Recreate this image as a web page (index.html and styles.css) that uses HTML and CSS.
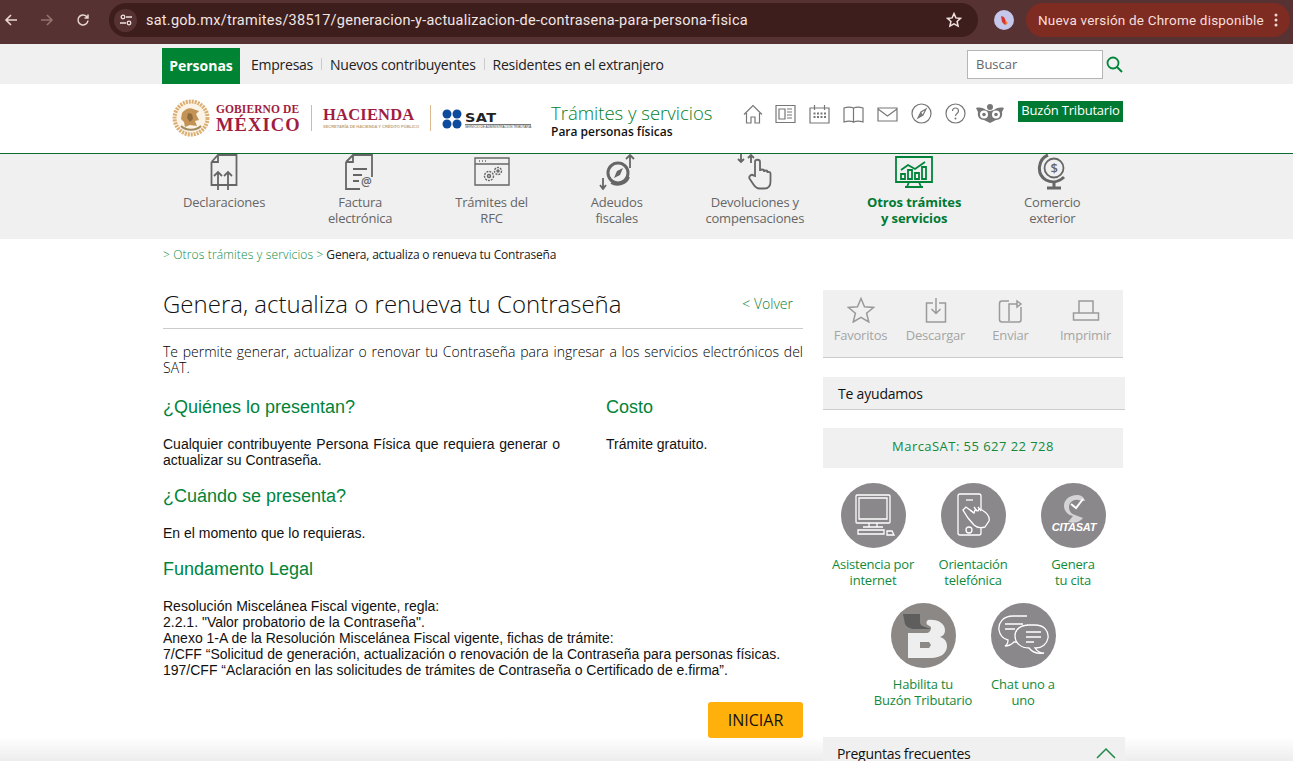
FILE: index.html
```html
<!DOCTYPE html>
<html lang="es">
<head>
<meta charset="utf-8">
<title>Genera, actualiza o renueva tu Contraseña</title>
<link rel="stylesheet" href="styles.css">
</head>
<body>
<div class="chrome">
  <svg class="cbtn" width="14" height="14" viewBox="0 0 14 14"><path d="M13 7H2M7 2 2 7l5 5" fill="none" stroke="#e9d6d4" stroke-width="1.6"/></svg>
  <svg class="cbtn dim" width="14" height="14" viewBox="0 0 14 14"><path d="M1 7h11M7 2l5 5-5 5" fill="none" stroke="#94736f" stroke-width="1.6"/></svg>
  <svg class="cbtn" width="14" height="14" viewBox="0 0 14 14"><path d="M12 7.5A5 5 0 1 1 10.5 3.4L12 5M12 1.5V5H8.5" fill="none" stroke="#e9d6d4" stroke-width="1.5"/></svg>
  <div class="omni">
    <span class="tune"><svg width="14" height="12" viewBox="0 0 14 12"><g fill="none" stroke="#f0e2e0" stroke-width="1.3"><circle cx="4" cy="3" r="1.8"/><path d="M7 3h6M1 9h6"/><circle cx="10" cy="9" r="1.8"/></g></svg></span>
    <span class="url">sat.gob.mx/tramites/38517/generacion-y-actualizacion-de-contrasena-para-persona-fisica</span>
    <svg class="ostar" width="16" height="16" viewBox="0 0 16 16"><path d="m8 1.6 1.9 4.3 4.6.5-3.4 3.1 1 4.6L8 11.8l-4.1 2.3 1-4.6L1.500 6.400l4.600-.5z" fill="none" stroke="#f0e2e0" stroke-width="1.5"/></svg>
  </div>
  <span class="avatar"><svg width="20" height="20" viewBox="0 0 20 20"><circle cx="10" cy="10" r="10" fill="#c5c8ea"/><path d="M7 6l3 1 3 6-2 2-3-3z" fill="#d8342b"/><path d="M11 10l3 3-2 2z" fill="#f08a3a"/></svg></span>
  <div class="update"><span>Nueva versión de Chrome disponible</span><svg width="4" height="14" viewBox="0 0 4 14"><g fill="#f0d8d4"><circle cx="2" cy="2" r="1.500"/><circle cx="2" cy="7" r="1.500"/><circle cx="2" cy="12" r="1.500"/></g></svg></div>
</div>

<div class="topbar">
  <div class="wrap topbar-in">
    <a class="tab">Personas</a>
    <a class="toplink">Empresas</a><i class="sep"></i>
    <a class="toplink">Nuevos contribuyentes</a><i class="sep"></i>
    <a class="toplink">Residentes en el extranjero</a>
    <div class="search">
      <div class="search-box">Buscar</div>
      <svg width="17" height="17" viewBox="0 0 17 17"><circle cx="7" cy="7" r="5.500" fill="none" stroke="#00843a" stroke-width="1.800"/><path d="m11 11 5 5" stroke="#00843a" stroke-width="2"/></svg>
    </div>
  </div>
</div>

<header class="head">
  <div class="wrap head-in">
    <div class="logos">
      <svg class="emblem" width="38" height="38" viewBox="0 0 38 38"><circle cx="19" cy="19" r="16.500" fill="#fbf3e6" stroke="#dcae72" stroke-width="4" stroke-dasharray="2 1"/><path d="M10 14c3-4 8-6 11-4l6 2-3 3 3 6-4 1 2 5-7-1-5 2-1-5-3-3z" fill="#c39356"/><path d="M16 14l4 1 1 5-3 3-3-4z" fill="#8e6a3c"/><path d="M9 27c5 5 15 5 20 0" fill="none" stroke="#a38a5e" stroke-width="2"/></svg>
      <div class="gob"><span class="gob1">GOBIERNO DE</span><span class="gob2">MÉXICO</span></div>
      <i class="lsep"></i>
      <div class="hac"><span class="hac1">HACIENDA</span><span class="hac2">SECRETARÍA DE HACIENDA Y CRÉDITO PÚBLICO</span></div>
      <i class="lsep sat-sep"></i>
      <svg class="satdots" width="20" height="20" viewBox="0 0 20 20"><g fill="#0f4b9c"><ellipse cx="5" cy="5" rx="4.500" ry="4.500"/><ellipse cx="15" cy="5" rx="4.500" ry="4.500"/><ellipse cx="5" cy="15" rx="4.500" ry="4.500"/><ellipse cx="15" cy="15" rx="4.500" ry="4.500"/></g></svg>
      <div class="sat"><span class="sat1">SAT</span><span class="sat2">SERVICIO DE ADMINISTRACIÓN TRIBUTARIA</span></div>
    </div>
    <div class="ts"><div class="ts1">Trámites y servicios</div><div class="ts2">Para personas físicas</div></div>
    <div class="hicons">
      <svg class="h-home" width="20" height="20" viewBox="0 0 20 20"><path d="M1 10.500 10 1.500l9 9M3.500 9v10h4.500v-6h4v6h4.500V9" class="ln"/></svg>
      <svg width="21" height="20" viewBox="0 0 21 20"><path d="M1 1.500h19v17H1zM4 5h6v10H4zM12 5h5M12 8h5M12 11h5M12 14h5" class="ln"/></svg>
      <svg width="21" height="20" viewBox="0 0 21 20"><path d="M1 4h19v15H1zM5.500 1v5M15.500 1v5" class="ln"/><g fill="#777"><rect x="4.500" y="8.500" width="2" height="2"/><rect x="8" y="8.500" width="2" height="2"/><rect x="11.500" y="8.500" width="2" height="2"/><rect x="15" y="8.500" width="2" height="2"/><rect x="4.500" y="12" width="2" height="2"/><rect x="8" y="12" width="2" height="2"/><rect x="11.500" y="12" width="2" height="2"/><rect x="15" y="12" width="2" height="2"/></g></svg>
      <svg width="21" height="20" viewBox="0 0 21 20"><path d="M1 4c3-1 7-1 9.500 0v14C8 17 4 17 1 18zM20 4c-3-1-7-1-9.500 0v14c2.500-1 6.500-1 9.500 0z" class="ln"/></svg>
      <svg width="21" height="20" viewBox="0 0 21 20"><path d="M1 4h19v13H1zM1 5l9.500 7L20 5" class="ln"/></svg>
      <svg width="21" height="21" viewBox="0 0 21 21"><circle cx="10.500" cy="10.500" r="9.500" class="ln"/><path d="m15 6-3 6-5 3 3-6z" class="ln"/><path d="m7 15 5-3-2-3z" fill="#777"/></svg>
      <svg width="21" height="21" viewBox="0 0 21 21"><circle cx="10.500" cy="10.500" r="9.500" class="ln"/><path d="M7.500 8c0-4 6-4 6 0 0 2.500-3 2.500-3 5" class="ln"/><circle cx="10.500" cy="15.500" r="1" fill="#777"/></svg>
      <svg class="h-owl" width="28" height="20" viewBox="0 0 28 20"><path d="M0 4c4-1 8 0 10 2l4 1 4-1c2-2 6-3 10-2l-2 4c1 5-2 8-6 8l-6 3-6-3c-4 0-7-3-6-8z" fill="#777"/><circle cx="14" cy="3" r="3" fill="#777"/><circle cx="8" cy="10.500" r="4" fill="#fff"/><circle cx="20" cy="10.500" r="4" fill="#fff"/><circle cx="8" cy="10.500" r="1.800" fill="#777"/><circle cx="20" cy="10.500" r="1.800" fill="#777"/></svg>
    </div>
    <a class="buzon">Buzón Tributario</a>
  </div>
</header>

<nav class="nav">
  <div class="nav-in">
    <a class="ni">
      <svg width="36" height="36" viewBox="0 0 36 36"><path d="M5.500 8V31H30.500V1H12L5.500 8M12 1V8H5.500M12 36V18M8 22l4-4 4 4M22 36V18M18 22l4-4 4 4" class="nv"/></svg>
      <span>Declaraciones</span></a>
    <a class="ni">
      <svg width="36" height="36" viewBox="0 0 36 36"><path d="M4 8 11 1H30V23M11 1V8H4M4 8V35H18M11 15H25M11 21H20M11 27H17" class="nv"/><text x="19" y="32" class="at">@</text></svg>
      <span>Factura<br>electrónica</span></a>
    <a class="ni">
      <svg width="36" height="36" viewBox="0 0 36 36"><path d="M1 4h34v27H1zM1 10h34" class="nv thin"/><path d="M5 7h1M8 7h1M11 7h1" class="nv thin"/><circle cx="15" cy="22" r="4.500" class="nv thin gear"/><circle cx="15" cy="22" r="1.500" class="nv thin"/><circle cx="24" cy="17" r="3.500" class="nv thin gear"/><circle cx="24" cy="17" r="1" class="nv thin"/></svg>
      <span>Trámites del<br>RFC</span></a>
    <a class="ni">
      <svg width="36" height="36" viewBox="0 0 36 36"><circle cx="19" cy="19" r="10" class="nv thick"/><path d="M30 23c-2 7-12 10-18 6" class="nv"/><path d="m24 14-3 7-6 3 3-7z" fill="#666"/><path d="M31 14V1M27 5l4-4 4 4M4 24v11M1 31l3 4 3-4" class="nv"/></svg>
      <span>Adeudos<br>fiscales</span></a>
    <a class="ni">
      <svg width="36" height="36" viewBox="0 0 36 36"><path d="M18 22V8c0-3 5-3 5 0v9c0-2 4-2 4 0v1c0-2 3.500-2 3.500 0v1c0-1.500 3-1.500 3 .5v8c0 4-2 7-6 7h-5c-3 0-4-1-6-4l-4-6c-1-2 2-5 4-3z" class="nv"/><path d="M4 0v8M1 5l3 3 3-3M14 9V1M11 4l3-3 3 3" class="nv"/></svg>
      <span>Devoluciones y<br>compensaciones</span></a>
    <a class="ni active">
      <svg width="38" height="36" viewBox="0 0 38 36"><path d="M1 3h36v25H1zM14 28l-2 5M24 28l2 5M10 33h18" class="gv"/><path d="M6 16l7-5 7 4 10-7" class="gv"/><path d="M6 20h4v5H6zM13 16h4v9h-4zM20 19h4v6h-4zM27 13h4v12h-4z" class="gv"/></svg>
      <span>Otros trámites<br>y servicios</span></a>
    <a class="ni">
      <svg width="36" height="36" viewBox="0 0 36 36"><circle cx="20" cy="14" r="9.500" class="nv"/><path d="M14 1C4 5 2 20 12 26c6 3 13 2 18-3" class="nv thick"/><path d="M20 27v7M13 34h14" class="nv thick"/><text x="20" y="19" class="dollar">$</text></svg>
      <span>Comercio<br>exterior</span></a>
  </div>
</nav>

<div class="wrap crumb"><a>&gt; Otros trámites y servicios &gt;</a> Genera, actualiza o renueva tu Contraseña</div>

<div class="wrap page">
  <main class="main">
    <div class="title-row"><h1>Genera, actualiza o renueva tu Contraseña</h1><a class="back">&lt; Volver</a></div>
    <p class="intro">Te permite generar, actualizar o renovar tu Contraseña para ingresar a los servicios electrónicos del SAT.</p>
    <div class="cols">
      <section class="col-a"><h2>¿Quiénes lo presentan?</h2><p>Cualquier contribuyente Persona Física que requiera generar o actualizar su Contraseña.</p></section>
      <section class="col-b"><h2>Costo</h2><p>Trámite gratuito.</p></section>
    </div>
    <h2>¿Cuándo se presenta?</h2>
    <p>En el momento que lo requieras.</p>
    <h2>Fundamento Legal</h2>
    <p>Resolución Miscelánea Fiscal vigente, regla:<br>2.2.1. "Valor probatorio de la Contraseña".<br>Anexo 1-A de la Resolución Miscelánea Fiscal vigente, fichas de trámite:<br>7/CFF “Solicitud de generación, actualización o renovación de la Contraseña para personas físicas.<br>197/CFF “Aclaración en las solicitudes de trámites de Contraseña o Certificado de e.firma”.</p>
    <div class="cta"><a class="iniciar">INICIAR</a></div>
  </main>

  <aside class="side">
    <div class="actions">
      <a class="act"><svg width="28" height="26" viewBox="0 0 28 26"><path d="m14 1.500 3.500 8.300 9 .7-6.900 5.800 2.200 8.700L14 20.300l-7.800 4.700 2.200-8.700L1.500 10.500l9-.7z" class="ag"/></svg>Favoritos</a>
      <a class="act"><svg width="22" height="26" viewBox="0 0 22 26"><path d="M8 6H1.500v19h19V6H14M11 1v15M6.500 12l4.500 4.500 4.500-4.500" class="ag"/></svg>Descargar</a>
      <a class="act"><svg width="26" height="26" viewBox="0 0 26 26"><path d="M11 4H4Q1.500 4 1.500 6.500v16Q1.500 25 4 25h17q2 0 2-2.500V10M11 24V7h8M19 4l4 3-4 3z" class="ag"/></svg>Enviar</a>
      <a class="act"><svg width="28" height="26" viewBox="0 0 28 26"><path d="M7 16V4h14v12M1.500 16h25v7h-25z" class="ag"/></svg>Imprimir</a>
    </div>
    <div class="band">Te ayudamos</div>
    <div class="marca">MarcaSAT: 55 627 22 728</div>
    <div class="helps">
      <a class="help"><span class="circle"><svg width="65" height="65" viewBox="0 0 65 65"><g class="wl"><path d="M16 12h32q1 0 1 1v26q0 1-1 1H16q-1 0-1-1V13q0-1 1-1zM18 15h28v21H18zM28 40v4h8v-4M22 44h20M17 47h26v4H17zM46 48h5l2 4h-7z"/></g></svg></span>Asistencia por<br>internet</a>
      <a class="help"><span class="circle"><svg width="65" height="65" viewBox="0 0 65 65"><g class="wl"><rect x="17" y="11" width="23" height="41" rx="2"/><path d="M25 17h7"/><circle cx="28" cy="47" r="3"/><path d="M22 27l3-3 8 6 1-3 3 1 1-2 3 1c5 3 8 7 7 11l-4 6c-4 1-8 1-11-2l-6-7z" fill="#8a888b"/><path d="M29 27l4 3M33 24l3 4M37 24l3 4"/></g></svg></span>Orientación<br>telefónica</a>
      <a class="help"><span class="circle"><svg width="65" height="65" viewBox="0 0 65 65"><path d="M36 12c-8 0-13 5-13 11 0 5 4 9 9 10l-5 6c6 2 12 0 15-4l-8-3c-4-1-6-4-6-8 0-5 5-8 9-7l7 1c-1-4-4-6-8-6z" fill="#d4d4d6"/><path d="m30 21 5 4 7-9" stroke="#fff" stroke-width="2" fill="none"/><text x="33" y="48" class="cita">CITASAT</text></svg></span>Genera<br>tu cita</a>
      <a class="help"><span class="circle alt"><svg width="65" height="65" viewBox="0 0 65 65"><path d="M12 11h17v8q0 4 5 5l6 2H22q-6-1-8-5z" fill="#5e5e5e"/><path d="M17 30h18c3 0 5-2 5-6l-3-2c-2 0-2-4 0-5 7-1 17 2 17 10 0 4-2 6-5 7 4 1 7 4 7 9 0 7-6 12-16 12H17z" fill="#eee"/><path d="M29 39h9l2 3-2 3h-9z" fill="#8b8885"/></svg></span>Habilita tu<br>Buzón Tributario</a>
      <a class="help"><span class="circle"><svg width="65" height="65" viewBox="0 0 65 65"><g class="wl"><path d="M36 13H22C12 13 7 20 8 27c1 6 5 9 9 10 0 3-1 5-3 6 4 0 7-2 9-4h6"/><path d="M36 22h8c9 0 14 6 13 13-1 6-6 10-12 10h-1c2 3 5 5 9 5-5 1-11 0-15-5-8 0-14-5-14-12s6-11 14-11z" fill="#8a888b"/><path d="M35 29h15M35 34h15M35 39h8M14 21h18M14 26h10"/></g></svg></span>Chat uno a<br>uno</a>
    </div>
    <div class="band faq"><span>Preguntas frecuentes</span><svg width="20" height="12" viewBox="0 0 20 12"><path d="m1 11 9-9 9 9" fill="none" stroke="#1f8a45" stroke-width="1.500"/></svg></div>
  </aside>
</div>
<div class="fade"></div>
</body>
</html>
```
FILE: styles.css
```css
* { box-sizing: border-box; }
html, body { margin: 0; height: 761px; overflow: hidden; }
body { position: relative; background: #fff; font-family: "Open Sans", sans-serif; font-weight: 300; color: #111; }
a { color: inherit; text-decoration: none; }
p, h1, h2 { margin: 0; }

.chrome { height: 44px; background: #573232; display: flex; align-items: center; padding: 0 3px 4px 4px; font-weight: 400; }
.cbtn { flex: none; margin-right: 22px; }
.cbtn:nth-child(3) { margin-right: 19px; }
.omni { width: 869px; height: 34px; border-radius: 17px; background: #3d1e1c; display: flex; align-items: center; padding: 0 16px 0 5px; flex: none; }
.tune { width: 23px; height: 23px; border-radius: 50%; background: #573232; display: flex; align-items: center; justify-content: center; flex: none; }
.url { margin-left: 9px; color: #f1e6e4; white-space: nowrap; flex: 1; letter-spacing: .25px; font-family: "Roboto", sans-serif; font-size: 14.500px; }
.avatar { width: 20px; height: 20px; margin-left: 16px; display: block; flex: none; line-height: 0; }
.update { margin-left: 12px; width: 264px; height: 34px; border-radius: 17px; background: #7e2b22; color: #f6dfda; font-family: "Roboto", sans-serif; font-size: 13.500px; letter-spacing: .2px; display: flex; align-items: center; justify-content: space-between; padding: 0 12px; }

.wrap { width: 1293px; padding-left: 162px; }
.topbar { height: 40px; background: #f0f0f0; }
.topbar-in { display: flex; align-items: center; height: 40px; }
.tab { height: 36px; width: 78px; margin-top: 4px; padding-bottom: 2px; background: #008332; color: #fff; font-weight: 700; font-size: 14px; display: flex; align-items: center; justify-content: center; margin-right: 11px; }
.toplink { font-size: 14px; color: #222; font-weight: 400; letter-spacing: -.25px; }
.sep { width: 1px; height: 12px; background: #ccc; margin: 0 8px; }
.search { margin-left: auto; margin-right: 170px; display: flex; align-items: center; gap: 3px; margin-top: 1px; }
.search-box { width: 136px; height: 29px; background: #fff; border: 1px solid #b5b5b5; font-size: 13px; line-height: 27px; padding-left: 8px; color: #666; font-weight: 400; }

.head { height: 70px; border-bottom: 1px solid #0a6b2e; }
.head-in { display: flex; align-items: flex-start; }
.logos { width: 389px; padding: 14px 0 0 10px; display: flex; align-items: center; height: 54px; }
.emblem { flex: none; margin-right: 6px; }
.gob { display: flex; flex-direction: column; font-family: "Liberation Serif", serif; font-weight: 700; color: #a11d3f; width: 85px; }
.gob1 { font-size: 11.500px; line-height: 13px; letter-spacing: .1px; white-space: nowrap; }
.gob2 { font-size: 18.500px; line-height: 18px; letter-spacing: 1.100px; }
.lsep { width: 1px; height: 26px; background: #d9b98d; margin: 0 11px 0 10px; flex: none; }
.sat-sep { margin-left: 11px; }
.hac { display: flex; flex-direction: column; width: 96px; color: #a11d3f; font-family: "Liberation Serif", serif; }
.hac1 { font-size: 16.500px; font-weight: 700; line-height: 18px; letter-spacing: .2px; white-space: nowrap; }
.hac2 { font-family: "Liberation Sans", sans-serif; font-size: 4px; font-weight: 700; line-height: 6px; color: #c4a678; white-space: nowrap; }
.satdots { flex: none; margin-right: 3px; margin-top: 2px; }
.sat { display: flex; flex-direction: column; margin-top: 6px; }
.sat1 { font-family: "DejaVu Sans", sans-serif; font-weight: 700; font-size: 12px; line-height: 11px; color: #222; letter-spacing: .4px; transform: scaleX(1.2); transform-origin: left; }
.sat2 { font-family: "Liberation Sans", sans-serif; font-size: 3.100px; line-height: 4px; border-top: 1px solid #777; white-space: nowrap; color: #444; font-weight: 400; }
.ts { width: 192px; padding-top: 18px; }
.ts1 { font-size: 18.500px; line-height: 22px; color: #00802b; white-space: nowrap; font-weight: 300; }
.ts2 { font-size: 12px; line-height: 15px; font-weight: 600; color: #111; white-space: nowrap; }
.hicons { display: flex; align-items: center; gap: 13px; padding-top: 19px; width: 275px; height: 40px; }
.h-home { margin-right: -1px; }
.h-owl { margin-left: -3px; }
.ln { fill: none; stroke: #777; stroke-width: 1.200; }
.buzon { margin-top: 17px; width: 105px; height: 21px; background: #007a33; color: #fff; font-size: 13px; font-weight: 400; text-align: center; line-height: 19px; white-space: nowrap; letter-spacing: -.2px; }

.nav { height: 85px; background: #f0f0f0; overflow: hidden; }
.nav-in { display: flex; gap: 62.800px; padding-left: 183px; }
.ni { display: flex; flex-direction: column; align-items: center; text-align: center; font-size: 13px; line-height: 16px; color: #666; white-space: nowrap; font-weight: 400; letter-spacing: -.2px; }
.ni span { margin-top: 4px; }
.ni svg { display: block; }
.nv { fill: none; stroke: #666; stroke-width: 1.800; }
.nv.thin { stroke-width: 1.400; }
.nv.thick { stroke-width: 3; }
.gear { stroke-dasharray: 2 1; }
.gv { fill: none; stroke: #00843a; stroke-width: 1.800; }
.at { font-size: 12px; font-weight: 600; fill: #666; font-family: "Open Sans", sans-serif; }
.dollar { font-size: 13px; font-weight: 600; fill: #666; text-anchor: middle; font-family: "Open Sans", sans-serif; }
.active { color: #007a33; font-weight: 700; letter-spacing: -.1px; }

.crumb { padding-left: 163px; height: 32px; padding-top: 8px; font-size: 12px; line-height: 16px; font-weight: 400; color: #222; letter-spacing: -.2px; }
.crumb a { color: #0f8a3f; font-weight: 300; letter-spacing: .15px; }

.page { display: flex; gap: 20px; padding-left: 163px; padding-top: 19px; align-items: flex-start; }
.main { width: 640px; font-family: "Liberation Sans", sans-serif; font-weight: 400; font-size: 14px; line-height: 16px; color: #111; }
.title-row { display: flex; justify-content: space-between; height: 39px; border-bottom: 1px solid #ccc; font-family: "Open Sans", sans-serif; font-weight: 300; }
.title-row h1 { font-size: 24px; line-height: 30px; font-weight: 300; color: #111; white-space: nowrap; margin-top: -1px; }
.back { color: #0a7f36; font-size: 14px; line-height: 28px; margin-right: 10px; }
.intro { font-family: "Open Sans", sans-serif; font-weight: 300; text-align: justify; margin-top: 15px; color: #000; }
.main h2 { font-size: 18px; font-weight: 400; line-height: 22px; color: #00843a; margin-top: 17px; margin-bottom: 18px; }
.cols { display: flex; margin-top: 3px; }
.col-a { width: 443px; padding-right: 46px; text-align: justify; }
.col-b { flex: 1; }
.cta { display: flex; justify-content: flex-end; margin-top: 24px; }
.iniciar { width: 95px; height: 36px; border-radius: 3px; background: #ffb00b; color: #111; font-family: "Open Sans", sans-serif; font-size: 16px; font-weight: 400; display: flex; align-items: center; justify-content: center; }

.side { width: 302px; font-weight: 400; }
.actions { width: 300px; height: 68px; background: #f0f0f0; border-bottom: 1px solid #ccc; display: grid; grid-template-columns: repeat(4, 75px); padding-top: 7px; }
.act { display: flex; flex-direction: column; align-items: center; font-size: 13px; line-height: 16px; color: #a5a5a5; gap: 4px; letter-spacing: -.2px; }
.ag { fill: none; stroke: #9a9a9a; stroke-width: 1.500; }
.band { height: 33px; margin-top: 19px; background: #f0f0f0; border-bottom: 1px solid #ccc; padding-left: 15px; font-size: 14px; line-height: 34px; color: #111; letter-spacing: -.2px; }
.marca { width: 300px; height: 40px; margin-top: 18px; background: #f0f0f0; color: #118a3b; font-size: 13px; line-height: 36px; text-align: center; letter-spacing: .45px; }
.helps { width: 300px; display: flex; flex-wrap: wrap; justify-content: center; margin-top: 15px; }
.help { width: 100px; height: 120px; text-align: center; font-size: 13px; line-height: 16px; color: #118a3b; white-space: nowrap; display: flex; flex-direction: column; align-items: center; letter-spacing: -.2px; }
.circle { width: 65px; height: 65px; border-radius: 50%; background: #8a888b; margin-bottom: 8px; display: block; flex: none; line-height: 0; }
.circle.alt { background: #8b8885; }
.wl { fill: none; stroke: #fff; stroke-width: 1.300; }
.cita { font-family: "Liberation Sans", sans-serif; font-size: 11px; font-weight: 700; font-style: italic; fill: #fff; text-anchor: middle; }
.faq { margin-top: 14px; display: flex; justify-content: space-between; align-items: center; padding-right: 9px; padding-left: 14px; position: relative; z-index: 1; letter-spacing: -.3px; }
.faq span { line-height: 32px; margin-top: 2px; }

.fade { position: absolute; left: 0; right: 0; bottom: 0; height: 24px; background: linear-gradient(rgba(235,235,235,0), rgba(235,235,235,.9)); }
```
